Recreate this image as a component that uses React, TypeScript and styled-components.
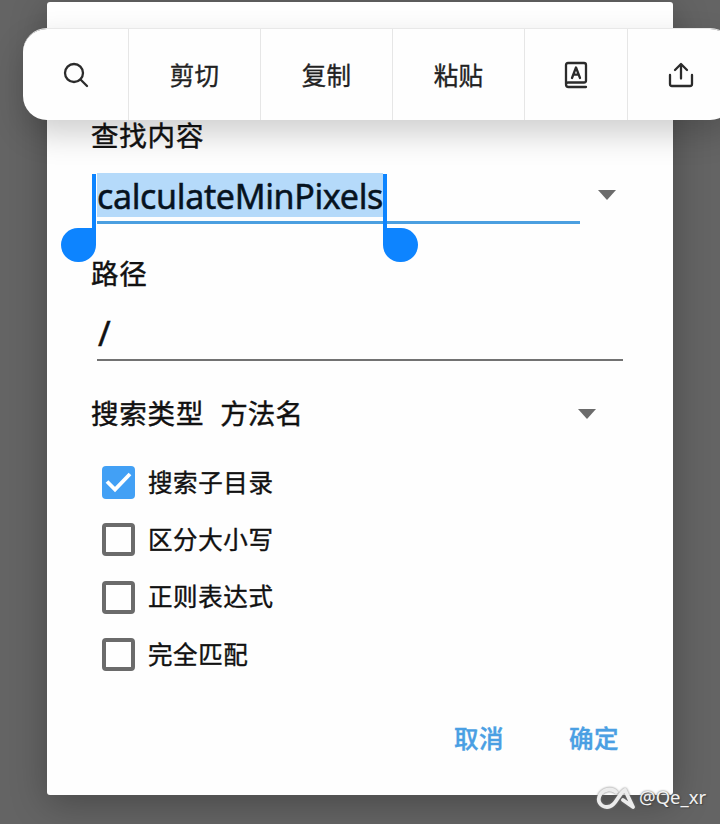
import React from "react";
import styled, { createGlobalStyle, css } from "styled-components";

const GlobalStyle = createGlobalStyle`
  * { box-sizing: border-box; }
  body { margin: 0; background: #646464; overflow: hidden; }
  button { border: 0; padding: 0; background: none; font: inherit; color: inherit; }
`;

const Screen = styled.div`
  position: relative;
  width: 720px;
  height: 824px;
  padding: 2px 47px 29px;
  overflow: hidden;
  background: #646464;
  font-family: "Noto Sans CJK SC", sans-serif;
  color: #111;
`;

const Dialog = styled.main`
  display: flex;
  flex-direction: column;
  width: 626px;
  height: 793px;
  padding: 114px 50px 0 44px;
  background: #fefefe;
  border-radius: 3px;
  box-shadow: 0 8px 36px rgba(0, 0, 0, 0.28);
`;

const Label = styled.div`
  height: 40px;
  line-height: 37px;
  font-size: 27.5px;
  letter-spacing: 0.8px;
  white-space: pre;
  -webkit-text-stroke: 0.45px #111;
`;

const SearchRow = styled.div`
  display: flex;
  align-items: flex-start;
  justify-content: space-between;
  height: 51px;
  margin: 17px 7px 0 6px;
`;

const SearchField = styled.div`
  width: 483px;
  height: 51px;
  border-bottom: 3px solid #4b9fe0;
`;

const Selection = styled.span`
  position: relative;
  display: block;
  width: 286px;
  height: 44px;
  line-height: 46px;
  background: #b5dafa;
  color: #07131f;
  font-family: "Noto Sans", sans-serif;
  font-size: 34px;
  letter-spacing: -0.35px;
  white-space: nowrap;
  -webkit-text-stroke: 0.5px #07131f;
`;

const Handle = styled.i<{ $side: "left" | "right" }>`
  position: absolute;
  top: 55px;
  width: 35px;
  height: 34px;
  background: #0d84ff;
  ${({ $side }) =>
    $side === "left"
      ? css`right: 287px; border-radius: 17px 0 17px 17px;`
      : css`left: 286px; border-radius: 0 17px 17px 17px;`}

  &::before {
    content: "";
    position: absolute;
    bottom: 17px;
    ${({ $side }) => ($side === "left" ? "right: 0;" : "left: 0;")}
    width: 4px;
    height: 71px;
    background: #0d84ff;
  }
`;

const Caret = styled.i<{ $top: number }>`
  width: 18px;
  height: 10px;
  margin-top: ${({ $top }) => $top}px;
  background: #6b6b6b;
  clip-path: polygon(0 0, 100% 0, 50% 100%);
`;

const PathLabel = styled(Label)`
  margin-top: 30px;
`;

const PathField = styled.div`
  width: 526px;
  height: 49px;
  margin: 18px 0 0 6px;
  padding-left: 1px;
  border-bottom: 2px solid #727272;
  line-height: 42px;
  font-family: "Noto Sans", sans-serif;
  font-size: 34px;
  -webkit-text-stroke: 0.5px #111;
`;

const TypeRow = styled.div`
  display: flex;
  height: 40px;
  margin-top: 33px;
  padding-right: 27px;

  ${Caret} { margin-left: auto; }
`;

const TypeValue = styled(Label)`
  margin-left: 16px;
  letter-spacing: 0.1px;
`;

const Options = styled.div`
  display: grid;
  grid-auto-rows: 57.3px;
  margin: 20px 0 0 11px;
`;

const Option = styled.label`
  display: flex;
  align-items: center;
  gap: 13px;
  font-size: 24.5px;
  letter-spacing: 0.6px;
  -webkit-text-stroke: 0.4px #111;
`;

const OptionText = styled.span`
  padding-bottom: 3px;
`;

const Box = styled.span<{ $checked?: boolean }>`
  display: flex;
  width: 33px;
  height: 33px;
  border-radius: 4px;
  border: ${({ $checked }) => ($checked ? "0" : "4px solid #6b6b6b")};
  background: ${({ $checked }) => ($checked ? "#42a0f5" : "transparent")};
`;

const Actions = styled.div`
  display: flex;
  justify-content: flex-end;
  gap: 65px;
  height: 40px;
  margin-top: 35px;
  padding-right: 4px;
`;

const Action = styled.button`
  line-height: 40px;
  font-size: 24.5px;
  letter-spacing: 0.5px;
  font-weight: 500;
  color: #4a9fe3;
  -webkit-text-stroke: 0.4px #4a9fe3;
`;

const Toolbar = styled.nav`
  position: absolute;
  left: 23px;
  top: 28px;
  display: grid;
  grid-template-columns: 105px 132px 132px 132px 103px 107px;
  height: 92px;
  border-top: 1px solid #e8e8e8;
  border-radius: 24px;
  background: #fefefe;
  background-clip: padding-box;
  box-shadow: 0 14px 32px rgba(0, 0, 0, 0.19);
`;

const Tool = styled.button`
  display: flex;
  align-items: center;
  justify-content: center;
  font-size: 24.5px;
  letter-spacing: 0.3px;
  color: #222;
  -webkit-text-stroke: 0.35px #222;

  & + & { border-left: 1px solid #e6e6e6; }
`;

const ToolText = styled.span`
  padding-bottom: 1px;
`;

const Icon = styled.svg`
  display: block;
  fill: none;
  stroke: #2b2b2b;
  stroke-width: 2.3;
  stroke-linecap: round;
  stroke-linejoin: round;
`;

const Watermark = styled.div`
  position: absolute;
  left: 596px;
  top: 784px;
  display: flex;
  align-items: center;
  gap: 3px;
  height: 28px;
  color: #f2f2f2;
  font-family: "Noto Sans", sans-serif;
  font-size: 18.5px;
  line-height: 24px;
  text-shadow: 0 0 2px #555, 1px 1px 1px #444;
  svg { filter: drop-shadow(0 0 1px #777); }
  span { padding-bottom: 3px; }
`;

const options = [
  { text: "搜索子目录", checked: true },
  { text: "区分大小写" },
  { text: "正则表达式" },
  { text: "完全匹配" },
];

export default function App() {
  return (
    <Screen>
      <GlobalStyle />
      <Dialog>
        <Label>查找内容</Label>
        <SearchRow>
          <SearchField>
            <Selection>
              calculateMinPixels
              <Handle $side="left" />
              <Handle $side="right" />
            </Selection>
          </SearchField>
          <Caret $top={17} />
        </SearchRow>
        <PathLabel>路径</PathLabel>
        <PathField>/</PathField>
        <TypeRow>
          <Label>搜索类型</Label>
          <TypeValue>方法名</TypeValue>
          <Caret $top={15} />
        </TypeRow>
        <Options>
          {options.map(({ text, checked }) => (
            <Option key={text}>
              <Box $checked={checked}>
                {checked && (
                  <svg width="33" height="33" viewBox="0 0 33 33">
                    <path d="M5 15.500l8 8L28 8" fill="none" stroke="#fff" strokeWidth="3.8" />
                  </svg>
                )}
              </Box>
              <OptionText>{text}</OptionText>
            </Option>
          ))}
        </Options>
        <Actions>
          <Action>取消</Action>
          <Action>确定</Action>
        </Actions>
      </Dialog>
      <Toolbar>
        <Tool aria-label="search">
          <Icon width="26" height="26" viewBox="0 0 26 26">
            <circle cx="11" cy="11" r="9" />
            <path d="M17.5 17.5l6.5 6.5" />
          </Icon>
        </Tool>
        <Tool><ToolText>剪切</ToolText></Tool>
        <Tool><ToolText>复制</ToolText></Tool>
        <Tool><ToolText>粘贴</ToolText></Tool>
        <Tool aria-label="dictionary">
          <Icon width="24" height="28" viewBox="0 0 24 28">
            <path d="M2 23V4Q2 2 4 2H20Q22 2 22 4V19.5Q22 21.5 20 21.5H4Q2 21.5 2 23.5Q2 26 4.5 26H22" />
            <path d="M8 17L12 6.5L16 17M9.3 13.6H14.7" />
          </Icon>
        </Tool>
        <Tool aria-label="share">
          <Icon width="26" height="26" viewBox="0 0 26 26">
            <path d="M2 13V22Q2 24 4 24H22Q24 24 24 22V13M13 16.5V2.5M7 8L13 2L19 8" />
          </Icon>
        </Tool>
      </Toolbar>
      <Watermark>
        <svg width="40" height="26" viewBox="0 0 40 26" fill="none" stroke="#ececec" strokeLinejoin="round" strokeLinecap="round">
          <path d="M20 7C16 3 8 4 4.500 9C0 16 5 22 11 22C20 22 22 9 29 5L37 22L27 15" strokeWidth="3.800" />
        </svg>
        <span>@Qe_xr</span>
      </Watermark>
    </Screen>
  );
}
